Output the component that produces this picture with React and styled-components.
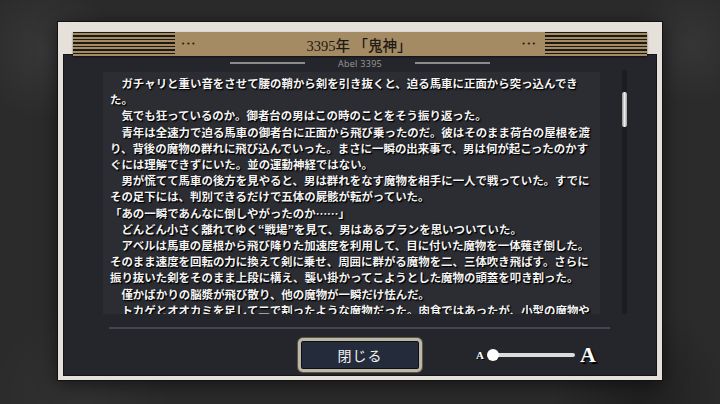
import React from "react";
import styled, { createGlobalStyle } from "styled-components";

const GlobalStyle = createGlobalStyle`
    html, body {
        margin: 0;
        padding: 0;
        background: #2a2a2a;
    }
`;

const LINES = [
    { indent: true, text: "ガチャリと重い音をさせて腰の鞘から剣を引き抜くと、迫る馬車に正面から突っ込んでき" },
    { text: "た。" },
    { indent: true, text: "気でも狂っているのか。御者台の男はこの時のことをそう振り返った。" },
    { indent: true, text: "青年は全速力で迫る馬車の御者台に正面から飛び乗ったのだ。彼はそのまま荷台の屋根を渡" },
    { text: "り、背後の魔物の群れに飛び込んでいった。まさに一瞬の出来事で、男は何が起こったのかす" },
    { text: "ぐには理解できずにいた。並の運動神経ではない。" },
    { indent: true, text: "男が慌てて馬車の後方を見やると、男は群れをなす魔物を相手に一人で戦っていた。すでに" },
    { text: "その足下には、判別できるだけで五体の屍骸が転がっていた。" },
    { text: "「あの一瞬であんなに倒しやがったのか……」" },
    { indent: true, text: "どんどん小さく離れてゆく“戦場”を見て、男はあるプランを思いついていた。" },
    { indent: true, text: "アベルは馬車の屋根から飛び降りた加速度を利用して、目に付いた魔物を一体薙ぎ倒した。" },
    { text: "そのまま速度を回転の力に換えて剣に乗せ、周囲に群がる魔物を二、三体吹き飛ばす。さらに" },
    { text: "振り抜いた剣をそのまま上段に構え、襲い掛かってこようとした魔物の頭蓋を叩き割った。" },
    { indent: true, text: "僅かばかりの脳漿が飛び散り、他の魔物が一瞬だけ怯んだ。" },
    { indent: true, text: "トカゲとオオカミを足して二で割ったような魔物だった。肉食ではあったが、小型の魔物や" },
];

const App = () => {
    return (
        <>
            <GlobalStyle />
            <Screen>
                <Frame>
                    <Header>
                        <Stripes />
                        <Dots $side="left">•••</Dots>
                        <Title>3395年 「鬼神」</Title>
                        <Dots $side="right">•••</Dots>
                        <Stripes />
                    </Header>
                    <Panel>
                        <SubRow>
                            <SubLine />
                            <SubLabel>Abel 3395</SubLabel>
                            <SubLine />
                        </SubRow>
                        <Body>
                            <TextBox>
                                {LINES.map((line, i) => (
                                    <TextLine key={i} $indent={line.indent}>
                                        {line.text}
                                    </TextLine>
                                ))}
                            </TextBox>
                            <ScrollTrack>
                                <ScrollThumb />
                            </ScrollTrack>
                        </Body>
                        <Separator />
                        <Footer>
                            <span />
                            <CloseButton>閉じる</CloseButton>
                            <SizeSlider>
                                <SizeLetter $big={false}>A</SizeLetter>
                                <SliderTrack>
                                    <SliderKnob />
                                </SliderTrack>
                                <SizeLetter $big={true}>A</SizeLetter>
                            </SizeSlider>
                        </Footer>
                    </Panel>
                </Frame>
            </Screen>
        </>
    );
};

export default App;

const Screen = styled.div`
    width: 720px;
    height: 404px;
    box-sizing: border-box;
    padding-top: 22px;
    display: flex;
    justify-content: center;
    overflow: hidden;
    background:
        radial-gradient(circle at 45px 50px, rgba(255, 255, 255, 0.06), transparent 70px),
        radial-gradient(circle at 690px 45px, rgba(255, 255, 255, 0.05), transparent 60px),
        radial-gradient(circle at 640px 395px, rgba(0, 0, 0, 0.25), transparent 90px),
        radial-gradient(circle at 80px 395px, rgba(255, 255, 255, 0.03), transparent 90px),
        #2b2b2b;
`;

const Frame = styled.div`
    width: 604px;
    height: 358px;
    box-sizing: border-box;
    padding: 10px 5px 4px;
    display: flex;
    flex-direction: column;
    background: #e5e0d9;
    box-shadow: 0 0 0 1px #121212, 0 4px 18px rgba(0, 0, 0, 0.55);
`;

const Header = styled.header`
    position: relative;
    z-index: 1;
    height: 24px;
    margin: 0 10px -2px;
    display: flex;
    align-items: center;
    background: #a58b63;
    box-shadow: 0 1px 2px rgba(0, 0, 0, 0.55);
`;

const Stripes = styled.div`
    width: 102px;
    align-self: stretch;
    background: repeating-linear-gradient(
        to bottom,
        #1c1813 0 1.4px,
        #a58b63 1.4px 3.43px
    );
`;

const Dots = styled.span`
    font-family: "DejaVu Sans", sans-serif;
    font-size: 7px;
    letter-spacing: 1px;
    color: #1e1a14;
    margin: ${(p) => (p.$side === "left" ? "0 0 0 6px" : "0 8px 0 0")};
`;

const Title = styled.h1`
    flex: 1;
    margin: 0;
    text-align: center;
    font-family: "Liberation Serif", "Noto Sans CJK JP", serif;
    font-size: 14.5px;
    font-weight: 500;
    color: #1d1a15;
`;

const Panel = styled.main`
    flex: 1;
    display: flex;
    flex-direction: column;
    background: #25262b;
    box-shadow: inset 0 0 0 1px #141518;
`;

const SubRow = styled.div`
    height: 18px;
    display: flex;
    align-items: center;
    justify-content: center;
    gap: 33px;
`;

const SubLine = styled.div`
    width: 75px;
    height: 1.5px;
    background: #8c8c8c;
`;

const SubLabel = styled.span`
    font-family: "Open Sans", "Liberation Sans", sans-serif;
    font-size: 9px;
    letter-spacing: 0.3px;
    color: #9a9a9a;
`;

const Body = styled.div`
    height: 242px;
    display: flex;
    padding-left: 40px;
`;

const TextBox = styled.div`
    width: 497px;
    box-sizing: border-box;
    padding: 3px 0 0 7px;
    overflow: hidden;
    background: #2c2d32;
`;

const TextLine = styled.div`
    white-space: nowrap;
    padding-left: ${(p) => (p.$indent ? "1em" : "0")};
    font-family: "Noto Sans CJK JP", sans-serif;
    font-size: 11.45px;
    font-weight: 700;
    line-height: 16.2px;
    color: #f4f4f4;
    text-shadow: 1px 1px 0 #000, 1px 1px 2px #000;
`;

const ScrollTrack = styled.div`
    width: 5px;
    margin: -2px 0 0 22px;
    height: 244px;
    background: #1c1d21;
`;

const ScrollThumb = styled.div`
    margin-top: 22px;
    height: 35px;
    border-radius: 2px;
    background: linear-gradient(to right, #8d8d8d, #eeeeee 50%, #a0a0a0);
`;

const Separator = styled.div`
    width: 501px;
    height: 2px;
    margin: 13px 0 0 46px;
    background: #42474d;
`;

const Footer = styled.footer`
    margin-top: 9px;
    display: grid;
    grid-template-columns: 1fr auto 1fr;
    align-items: center;
`;

const CloseButton = styled.button`
    width: 124px;
    height: 34px;
    box-sizing: border-box;
    border: 3px solid #bcb6a5;
    border-radius: 5px;
    background: #242b3a;
    box-shadow: inset 0 0 0 1px #0c0f16, 0 0 0 1px #5a5649;
    color: #f2f2f2;
    font-family: "Noto Sans CJK JP", sans-serif;
    font-size: 14px;
    letter-spacing: 1px;
    cursor: pointer;
`;

const SizeSlider = styled.div`
    justify-self: start;
    margin-left: 54px;
    display: flex;
    align-items: center;
`;

const SizeLetter = styled.span`
    font-family: "Liberation Serif", serif;
    font-weight: 700;
    font-size: ${(p) => (p.$big ? "22px" : "11px")};
    margin-left: ${(p) => (p.$big ? "5px" : "0")};
    color: #ffffff;
    text-shadow: ${(p) => (p.$big ? "2px 2px 0 #000" : "1px 1px 0 #000")};
`;

const SliderTrack = styled.div`
    position: relative;
    width: 83px;
    height: 4px;
    margin-left: 8px;
    border-radius: 2px;
    background: #dcdcdc;
`;

const SliderKnob = styled.div`
    position: absolute;
    left: -5px;
    top: -4px;
    width: 12px;
    height: 12px;
    border-radius: 50%;
    background: #ffffff;
`;
